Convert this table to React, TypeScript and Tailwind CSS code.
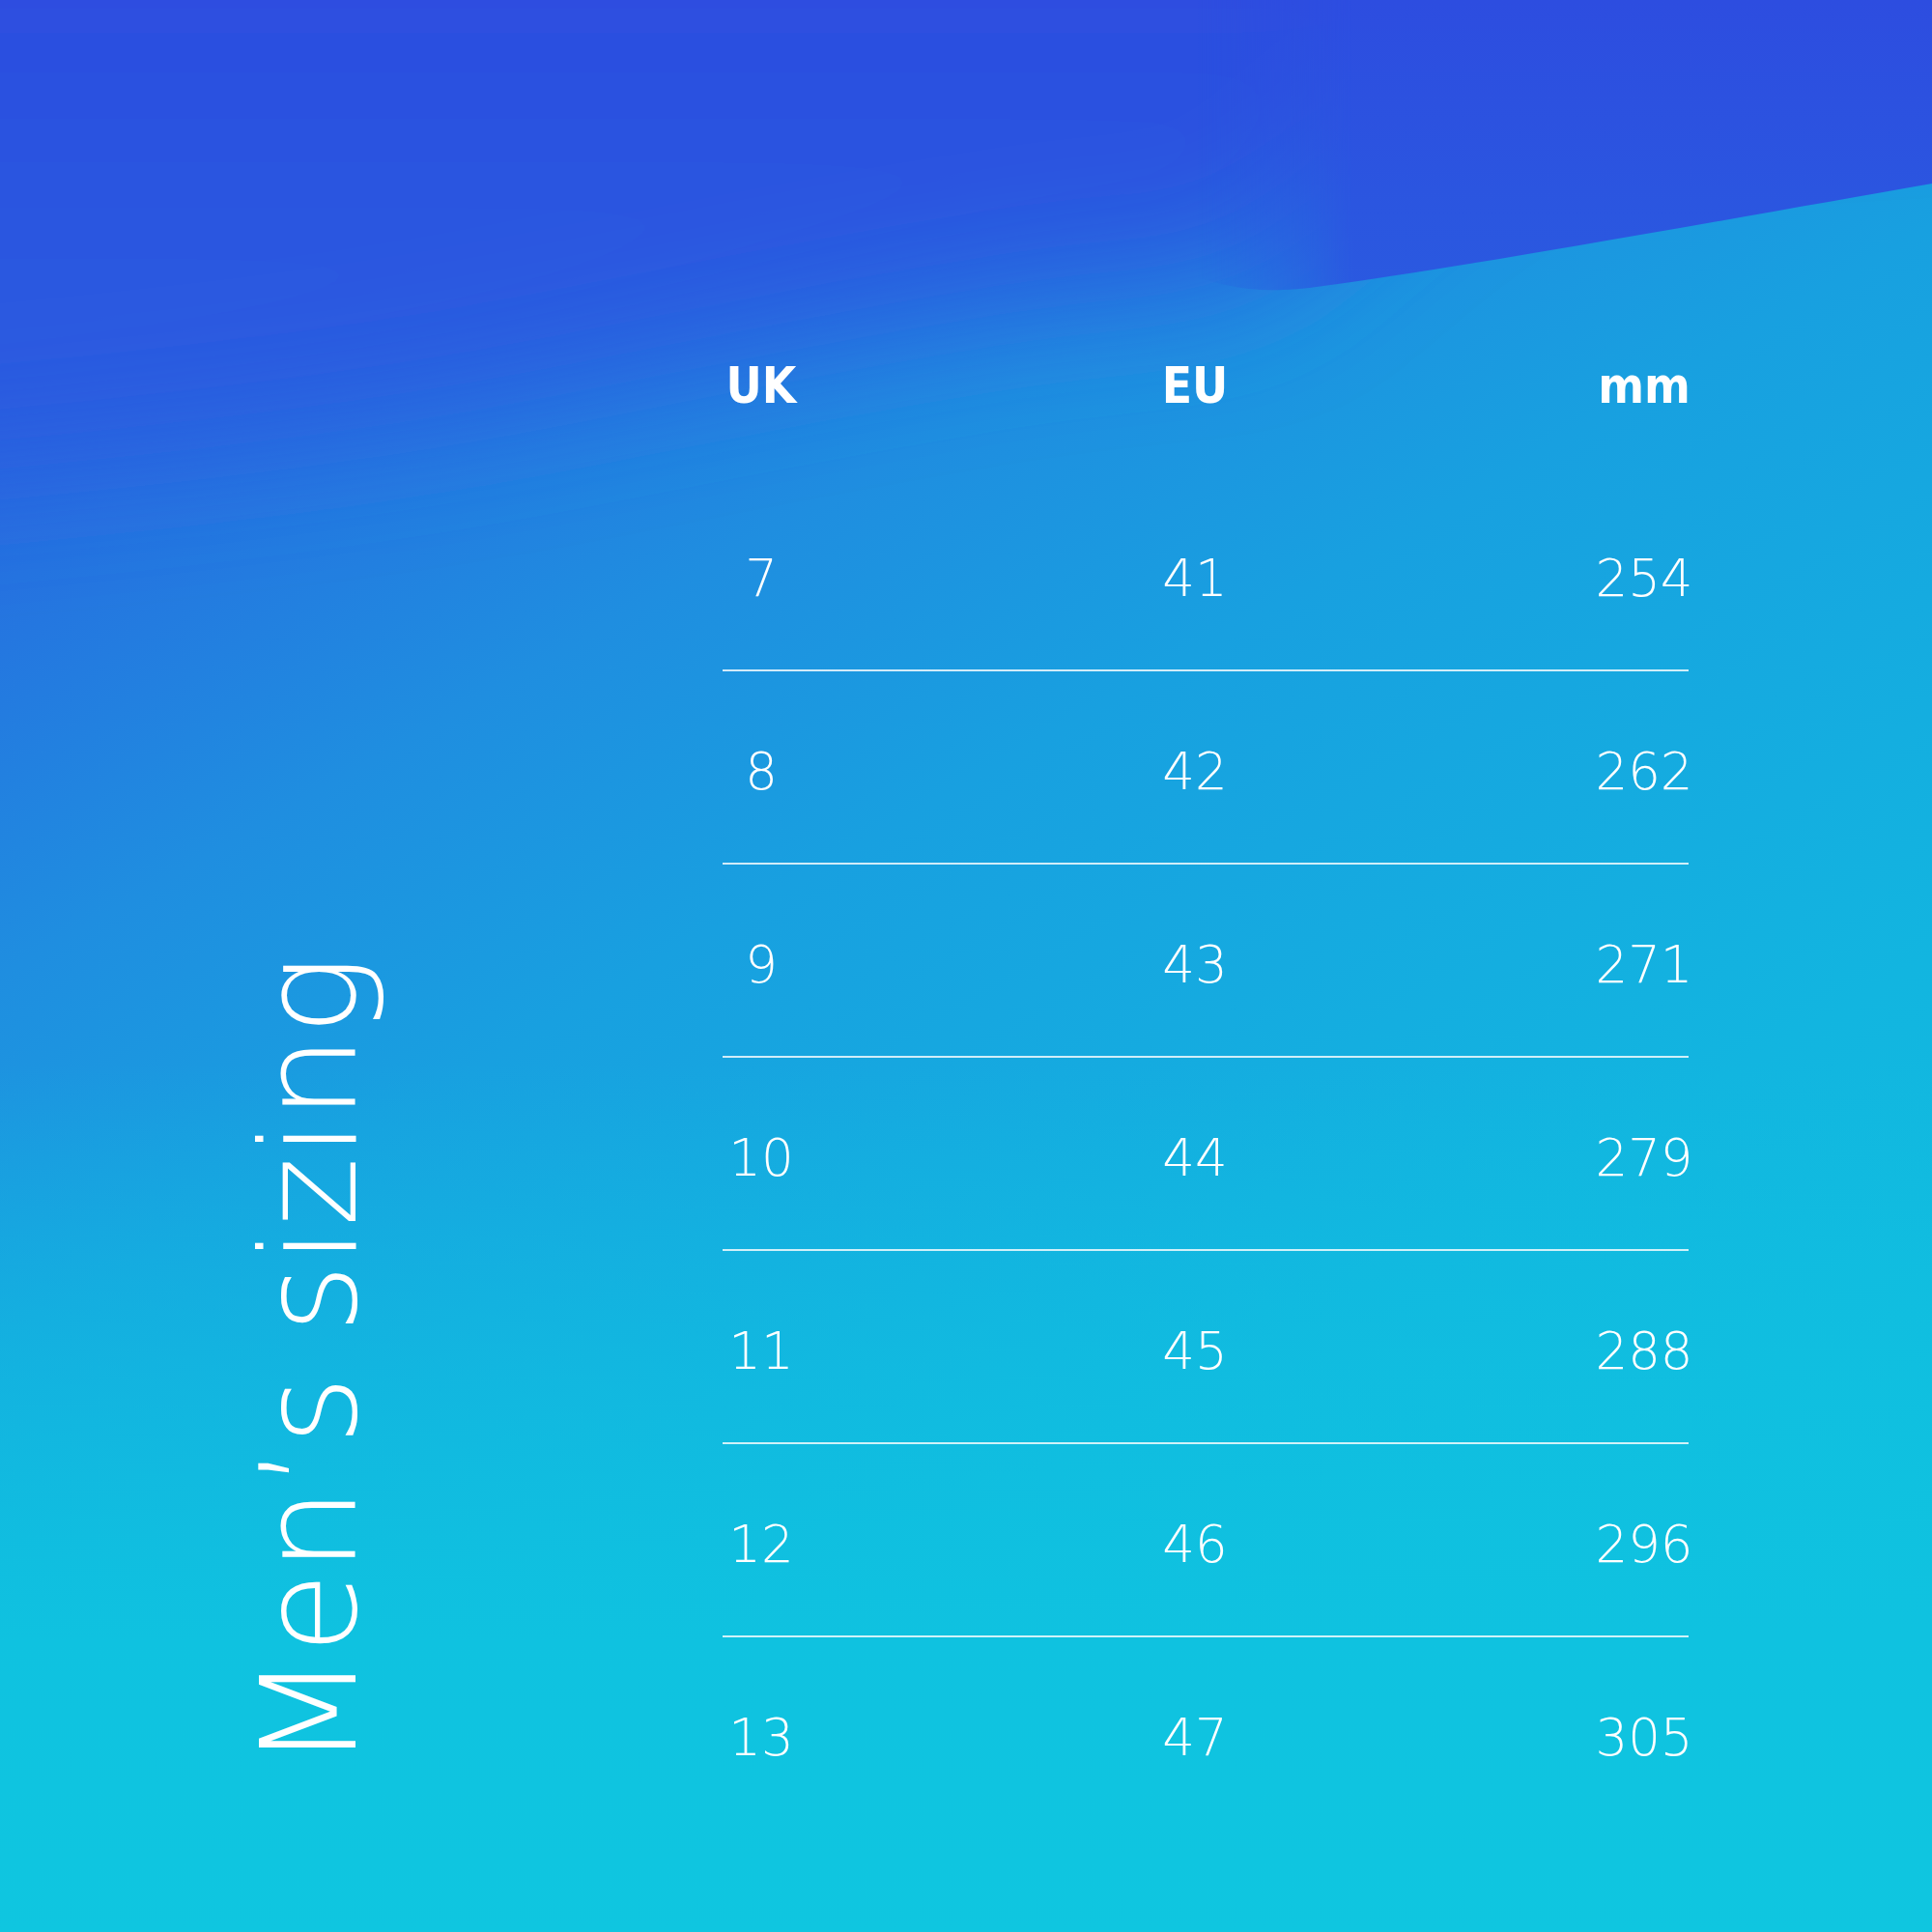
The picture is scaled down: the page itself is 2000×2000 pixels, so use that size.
import React from "react";

const rows = [
  { uk: "7", eu: "41", mm: "254" },
  { uk: "8", eu: "42", mm: "262" },
  { uk: "9", eu: "43", mm: "271" },
  { uk: "10", eu: "44", mm: "279" },
  { uk: "11", eu: "45", mm: "288" },
  { uk: "12", eu: "46", mm: "296" },
  { uk: "13", eu: "47", mm: "305" },
];

// dark blue wave in the top right, sharp on the right and soft to the left
const Blob = () => (
  <svg
    className="absolute left-[-400px] top-[-400px]"
    width="2800"
    height="1200"
    viewBox="-400 -400 2800 1200"
  >
    <defs>
      <linearGradient id="blobFill" x1="0" y1="0" x2="0" y2="320" gradientUnits="userSpaceOnUse">
        <stop offset="0" stopColor="#2d4de0" />
        <stop offset="1" stopColor="#2a5ae0" />
      </linearGradient>
      <linearGradient id="fadeIn" x1="0" y1="0" x2="2000" y2="0" gradientUnits="userSpaceOnUse">
        <stop offset="0" stopColor="#fff" stopOpacity="0" />
        <stop offset="0.62" stopColor="#fff" stopOpacity="0" />
        <stop offset="0.7" stopColor="#fff" stopOpacity="1" />
        <stop offset="1" stopColor="#fff" stopOpacity="1" />
      </linearGradient>
      <mask id="sharpMask">
        <rect x="-400" y="-400" width="2800" height="1200" fill="url(#fadeIn)" />
      </mask>
      <filter id="soft" x="-30%" y="-40%" width="160%" height="180%">
        <feGaussianBlur stdDeviation="70" />
      </filter>
    </defs>
    <path
      d="M-600,-600 H2600 V0 L1600,60 C1400,150 1320,290 1250,290 C1150,285 900,330 600,390 C400,430 200,460 -600,520 Z"
      fill="url(#blobFill)"
      filter="url(#soft)"
    />
    <path
      d="M0,-400 H2400 V190 H2000 C1800,225 1520,276 1370,296 C1320,303 1290,302 1250,290 C1150,275 900,250 600,-400 Z"
      fill="url(#blobFill)"
      mask="url(#sharpMask)"
    />
  </svg>
);

const Cells = ({ a, b, c }: { a: string; b: string; c: string }) => (
  <>
    <div className="w-[80px] shrink-0 text-center">{a}</div>
    <div className="w-[818px] shrink-0 text-center">{b}</div>
    <div className="w-[112px] shrink-0 text-center">{c}</div>
  </>
);

const App = () => {
  return (
    <div
      className="relative w-[2000px] h-[2000px] overflow-hidden bg-[linear-gradient(150deg,#2e4ae0_0%,#1f8ee0_32%,#18a0e0_44%,#12b5e0_68%,#0fc6e0_100%)] text-white"
      style={{ fontFamily: "'DejaVu Sans', sans-serif" }}
    >
      <div className="absolute inset-0 bg-[linear-gradient(to_bottom,transparent_55%,#0fc2e0_85%,#0fc6e0_100%)]" />
      <Blob />

      <div className="relative flex h-full">
        {/* Title */}
        <div className="w-[748px] shrink-0 flex flex-col justify-end pb-[169px] pl-[252px]">
          <h1 className="[writing-mode:vertical-rl] rotate-180 text-[138px] leading-none font-extralight whitespace-nowrap">
            Men’s sizing
          </h1>
        </div>

        {/* Table */}
        <div className="w-[1010px] shrink-0 pt-[374px]">
          <div
            className="flex text-[51px] leading-[51px] font-bold"
            style={{ fontFamily: "'DejaVu Sans Condensed', 'DejaVu Sans', sans-serif" }}
          >
            <Cells a="UK" b="EU" c="mm" />
          </div>
          <div className="mt-[70px]">
            {rows.map((r, i) => (
              <div key={r.uk}>
                <div className="flex pt-[77px] pb-[68px] text-[53px] leading-[53px] font-extralight">
                  <Cells a={r.uk} b={r.eu} c={r.mm} />
                </div>
                {i < rows.length - 1 && (
                  <div className="h-[2px] w-[1000px] bg-white/80" />
                )}
              </div>
            ))}
          </div>
        </div>
      </div>
    </div>
  );
};

export default App;
